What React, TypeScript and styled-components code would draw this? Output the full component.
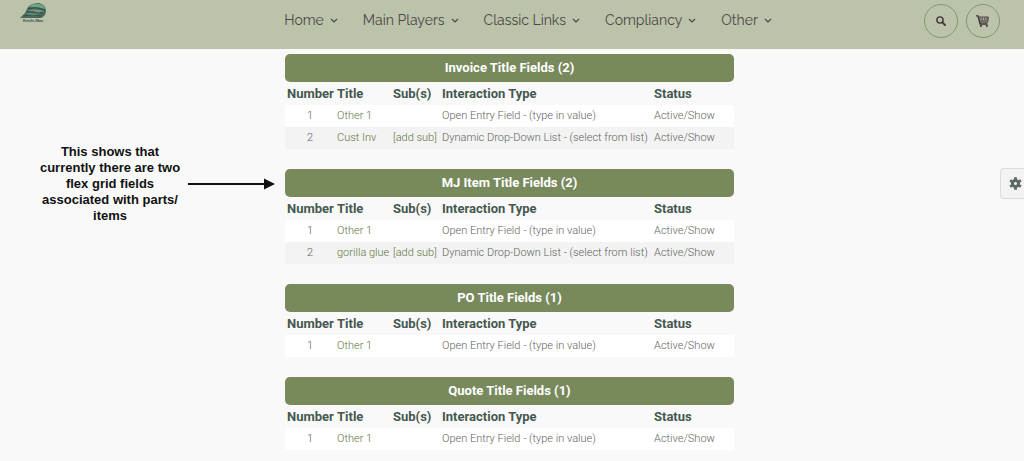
import React from "react";
import styled, { createGlobalStyle } from "styled-components";

const GlobalStyle = createGlobalStyle`
  * { box-sizing: border-box; }
  body {
    margin: 0;
    background: #f9f9f9;
    font-family: Roboto, "Liberation Sans", sans-serif;
    color: #5f6361;
  }
`;

const Header = styled.header`
  display: flex;
  justify-content: space-between;
  align-items: flex-start;
  height: 49px;
  padding: 0 24px 0 20px;
  background: #bbc3ab;
`;

const LogoLink = styled.a`
  flex: 0 0 112px;
  padding-top: 3px;
  svg { display: block; }
`;

const Nav = styled.nav`
  display: flex;
  gap: 25px;
  padding-top: 10px;
`;

const NavLink = styled.a`
  display: flex;
  align-items: center;
  gap: 6px;
  font: 400 14px/20px Raleway, Lato, sans-serif;
  color: #4d4645;
  text-decoration: none;
  white-space: nowrap;
  svg { margin-top: 2px; }
`;

const Tools = styled.div`
  display: flex;
  gap: 8px;
  padding-top: 4px;
`;

const RoundButton = styled.button`
  display: flex;
  align-items: center;
  justify-content: center;
  width: 34px;
  height: 34px;
  padding: 0;
  border: 1px solid #84986a;
  border-radius: 50%;
  background: transparent;
  color: #3c3638;
`;

const Main = styled.main`
  display: grid;
  grid-template-columns: minmax(0, 1fr) minmax(0, 449px) minmax(0, 1fr);
  padding: 5px 5px 8px 0;
`;

const Annotation = styled.aside`
  display: flex;
  justify-content: flex-end;
  align-items: center;
  align-self: start;
  gap: 6px;
  margin: 90px 10px 0 0;
`;

const Note = styled.p`
  margin: 0;
  width: 144px;
  font: 700 13px/16px "Liberation Sans", Arial, sans-serif;
  color: #111;
  text-align: center;
`;

const Sections = styled.div`
  display: flex;
  flex-direction: column;
  gap: 20px;
`;

const SectionTitle = styled.h2`
  margin: 0;
  border-radius: 5px;
  background: #78895c;
  color: #fff;
  font-size: 13px;
  font-weight: 700;
  line-height: 28px;
  text-align: center;
`;

const Table = styled.table`
  width: 100%;
  table-layout: fixed;
  border-collapse: collapse;
`;

const Col = styled.col<{ $width?: number }>`
  width: ${({ $width }) => ($width ? `${$width}px` : "auto")};
`;

const HeadCell = styled.th`
  padding: 0 0 0 2px;
  color: #455850;
  font-size: 13px;
  font-weight: 700;
  line-height: 23px;
  text-align: left;
  white-space: nowrap;
`;

const Row = styled.tr`
  background: #fff;
  &:nth-child(even) { background: #f3f3f3; }
`;

const Cell = styled.td<{ $center?: boolean }>`
  padding: ${({ $center }) => ($center ? "0" : "0 0 0 2px")};
  font-size: 11px;
  font-weight: 300;
  line-height: 22px;
  text-align: ${({ $center }) => ($center ? "center" : "left")};
  white-space: nowrap;
`;

const CellLink = styled.a`
  color: #5f7440;
  text-decoration: none;
`;

const SettingsTab = styled.button`
  position: fixed;
  top: 168px;
  right: 0;
  width: 24px;
  height: 31px;
  padding: 0 0 0 8px;
  display: flex;
  align-items: center;
  border: 1px solid #dcdcdc;
  border-right: 0;
  border-radius: 4px 0 0 4px;
  background: #f3f3f3;
  color: #5e6b65;
`;

const Logo = () => (
  <svg width="28" height="20" viewBox="0 0 28 20" aria-hidden="true">
    <path d="M0 15 5 10 8 4Q12 0 19 0Q26 2 26 8Q26 13 21 15Z" fill="#4d685c" />
    <path d="M9 4Q13 0 18 1Q24 1 25 6Q19 4 9 4ZM7 8Q14 5 24 8L19 10Q13 8 7 8ZM5 11Q12 9 19 12L13 13Q9 11 5 11Z" fill="#66a58e" />
    <path d="M8 6Q16 3 25 7M6 9Q15 8 23 10M3 13Q11 11 21 13" fill="none" stroke="#394b46" />
    <path d="M12 3Q18 1 22 4M12 7L20 9" fill="none" stroke="#81a176" />
    <text x="3" y="19" fontFamily="Liberation Sans, sans-serif" fontSize="4" fontWeight="700" fill="#45504a">Kettle-Max</text>
  </svg>
);

const Chevron = () => (
  <svg width="8" height="6" viewBox="0 0 8 6" aria-hidden="true">
    <path d="m1 1 3 3 3-3" fill="none" stroke="currentColor" strokeWidth="1.2" />
  </svg>
);

const SearchIcon = () => (
  <svg width="10" height="10" viewBox="0 0 10 10" aria-hidden="true">
    <circle cx="4" cy="4" r="3.1" fill="none" stroke="currentColor" strokeWidth="1.4" />
    <path d="m6.3 6.3 2.7 2.7" stroke="currentColor" strokeWidth="1.8" strokeLinecap="round" />
  </svg>
);

const CartIcon = () => (
  <svg width="13" height="12" viewBox="0 0 13 12" aria-hidden="true">
    <path d="M2.5 2h10l-1 6H4Z" fill="#736c65" />
    <path d="M0 .8h2L4 9h7.5" fill="none" stroke="currentColor" strokeWidth="1.3" />
    <path d="M3 2h9.4l-.8 5.6" fill="none" stroke="#514b4a" />
    <path d="M5 2.5v2.7M7.5 2.5v2.7M10 2.5v2.7" stroke="#a0a895" />
    <circle cx="5" cy="10.8" r="1.1" fill="currentColor" />
    <circle cx="10.8" cy="10.8" r="1.1" fill="currentColor" />
  </svg>
);

const GearIcon = () => (
  <svg width="13" height="13" viewBox="0 0 12 12" aria-hidden="true">
    <g stroke="currentColor" strokeWidth="2.6">
      <path d="M6 .3v3M6 8.7v3M1 3.1l2.6 1.5M8.4 7.4 11 8.9M1 8.9l2.6-1.5M8.4 4.6 11 3.1" />
    </g>
    <circle cx="6" cy="6" r="2.8" fill="none" stroke="currentColor" strokeWidth="2.8" />
  </svg>
);

const Arrow = () => (
  <svg width="87" height="12" viewBox="0 0 87 12" aria-hidden="true">
    <path d="M0 6h78" stroke="#111" strokeWidth="2" />
    <path d="m76 .5 11 5.5-11 5.5Z" fill="#111" />
  </svg>
);

type Field = { title: string; list?: boolean };

const navItems = ["Home", "Main Players", "Classic Links", "Compliancy", "Other"];

const sections: { name: string; fields: Field[] }[] = [
  { name: "Invoice", fields: [{ title: "Other 1" }, { title: "Cust Inv", list: true }] },
  { name: "MJ Item", fields: [{ title: "Other 1" }, { title: "gorilla glue", list: true }] },
  { name: "PO", fields: [{ title: "Other 1" }] },
  { name: "Quote", fields: [{ title: "Other 1" }] },
];

const FieldSection = ({ name, fields }: { name: string; fields: Field[] }) => (
  <section>
    <SectionTitle>{`${name} Title Fields (${fields.length})`}</SectionTitle>
    <Table>
      <colgroup>
        <Col $width={50} />
        <Col $width={56} />
        <Col $width={49} />
        <Col $width={212} />
        <Col />
      </colgroup>
      <thead>
        <tr>
          {["Number", "Title", "Sub(s)", "Interaction Type", "Status"].map((h) => (
            <HeadCell key={h} scope="col">{h}</HeadCell>
          ))}
        </tr>
      </thead>
      <tbody>
        {fields.map((f, i) => (
          <Row key={f.title}>
            <Cell $center>{i + 1}</Cell>
            <Cell><CellLink href="#">{f.title}</CellLink></Cell>
            <Cell>{f.list && <CellLink href="#">[add sub]</CellLink>}</Cell>
            <Cell>{f.list ? "Dynamic Drop-Down List - (select from list)" : "Open Entry Field - (type in value)"}</Cell>
            <Cell>Active/Show</Cell>
          </Row>
        ))}
      </tbody>
    </Table>
  </section>
);

export default function App() {
  return (
    <>
      <GlobalStyle />
      <Header>
        <LogoLink href="#" aria-label="Home page"><Logo /></LogoLink>
        <Nav>
          {navItems.map((item) => (
            <NavLink href="#" key={item}>{item}<Chevron /></NavLink>
          ))}
        </Nav>
        <Tools>
          <RoundButton aria-label="Search"><SearchIcon /></RoundButton>
          <RoundButton aria-label="Cart"><CartIcon /></RoundButton>
        </Tools>
      </Header>
      <Main>
        <Annotation>
          <Note>This shows that currently there are two flex grid fields associated with parts/ items</Note>
          <Arrow />
        </Annotation>
        <Sections>
          {sections.map((s) => <FieldSection key={s.name} {...s} />)}
        </Sections>
      </Main>
      <SettingsTab aria-label="Settings"><GearIcon /></SettingsTab>
    </>
  );
}
